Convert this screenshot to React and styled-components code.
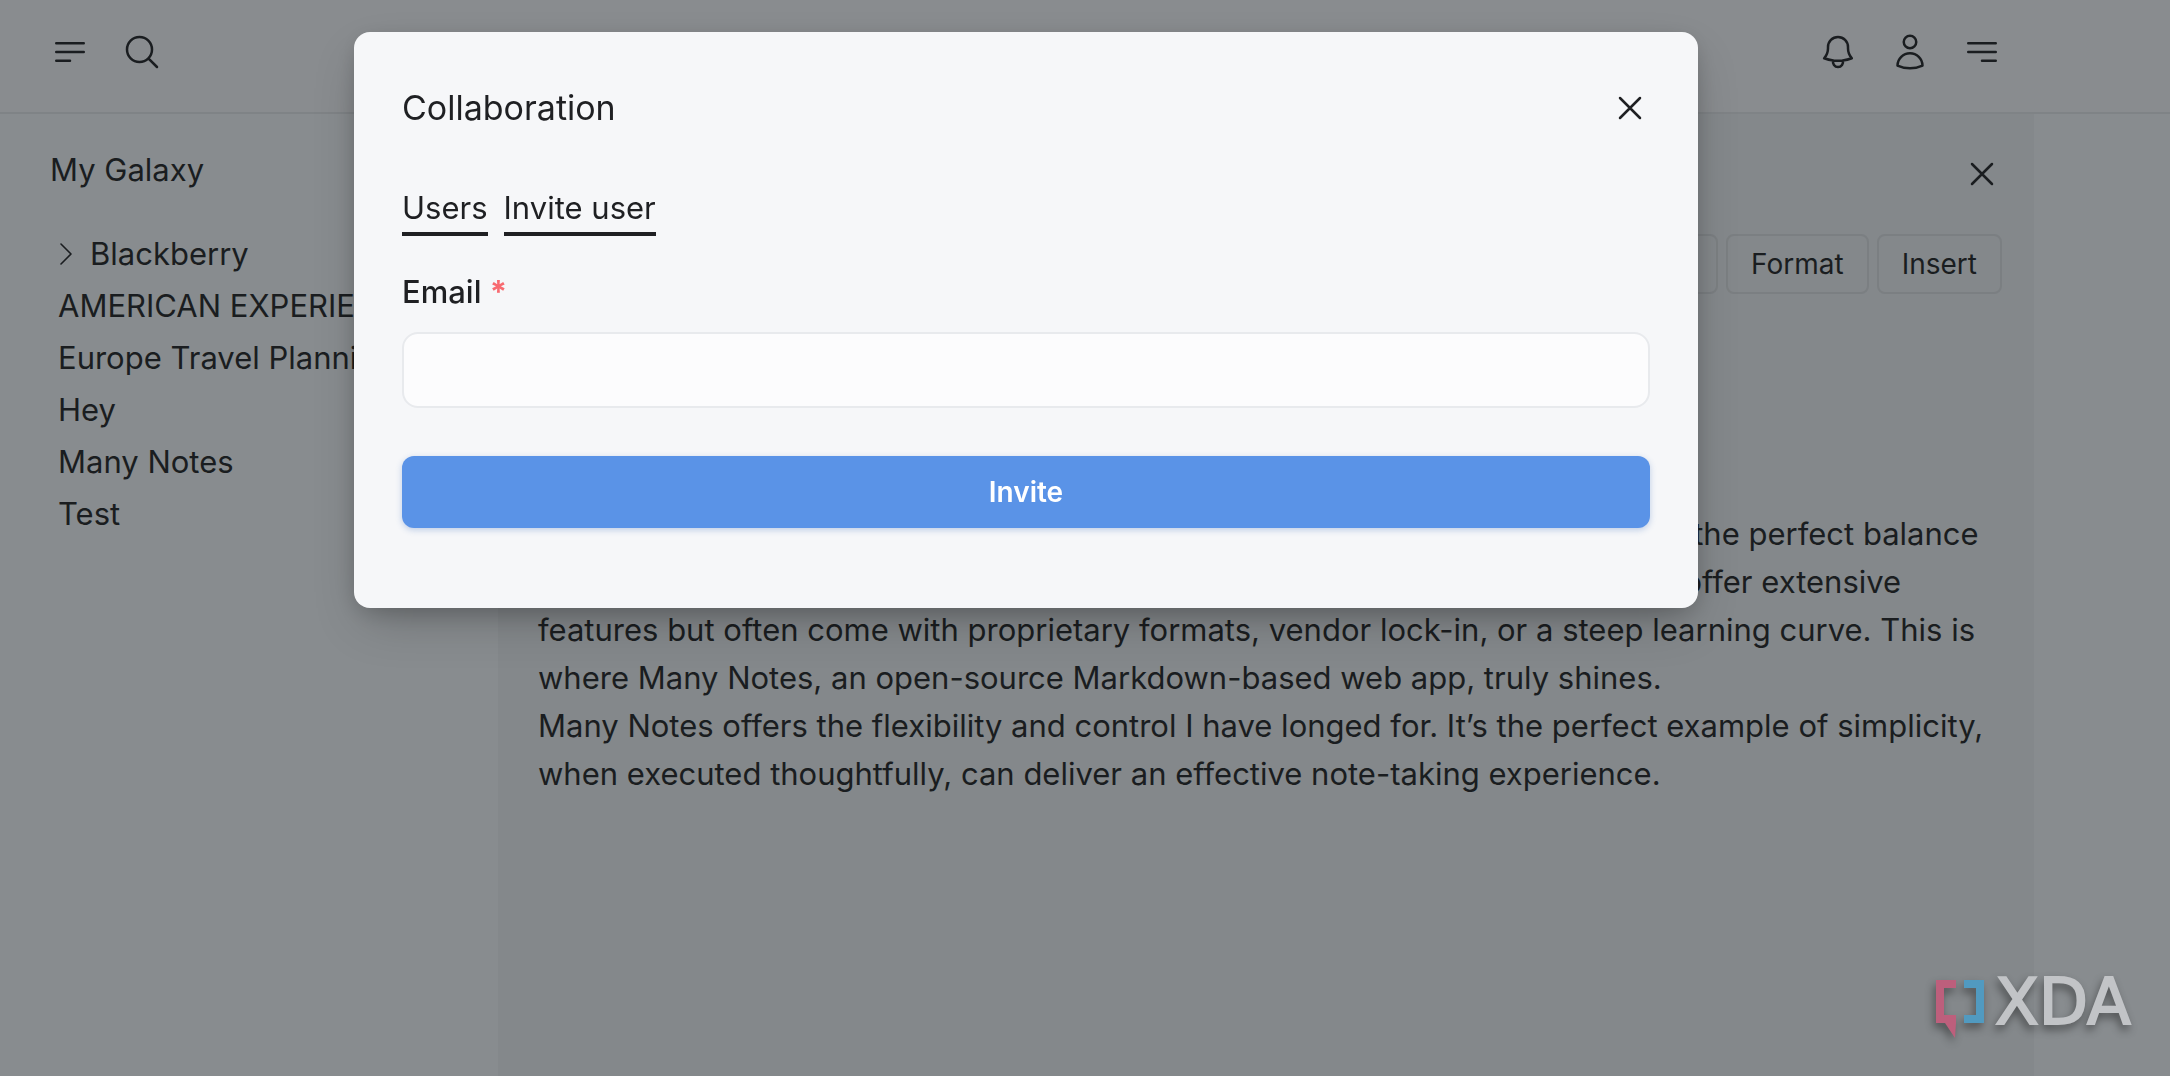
import React from "react";
import styled, { createGlobalStyle } from "styled-components";

const ink = "#1a1d20";

const GlobalStyle = createGlobalStyle`
  *, *::before, *::after { box-sizing: border-box; }
  body {
    margin: 0;
    background: #888c8f;
    color: ${ink};
    font-family: Inter, "Liberation Sans", sans-serif;
    font-size: 31px;
    line-height: 48px;
  }
  button, input { font: inherit; color: inherit; }
`;

const Page = styled.div`
  min-height: 100vh;
  display: flex;
  flex-direction: column;
`;

const Container = styled.div`
  width: 100%;
  max-width: 2034px;
  padding-left: 18px;
  display: flex;
`;

const Header = styled.header`
  background: #898c8f;
  border-bottom: 2px solid #7f8386;
`;

const HeaderBar = styled(Container)`
  justify-content: space-between;
  padding: 32px 32px 40px 50px;
`;

const IconGroup = styled.div`
  display: flex;
  gap: 32px;
`;

const IconButton = styled.button`
  display: flex;
  padding: 0;
  border: 0;
  background: none;
  cursor: pointer;
`;

const Svg = styled.svg`
  width: ${(p) => p.$size}px;
  height: ${(p) => p.$size}px;
  fill: none;
  stroke: currentColor;
  stroke-width: ${(p) => p.$stroke};
  stroke-linecap: round;
  stroke-linejoin: round;
`;

const Body = styled(Container)`
  flex: 1;
`;

const Sidebar = styled.nav`
  width: 480px;
  flex: none;
  padding: 32px;
  overflow: hidden;
`;

const VaultName = styled.h2`
  margin: 0 0 36px;
  font-size: 31px;
  line-height: 48px;
  font-weight: 400;
`;

const Tree = styled.ul`
  margin: 0;
  padding: 0;
  list-style: none;
  display: flex;
  flex-direction: column;
  gap: 4px;
`;

const TreeItem = styled.li`
  display: flex;
  align-items: center;
  gap: 8px;
  padding-left: ${(p) => (p.$folder ? 0 : 8)}px;
`;

const TreeLink = styled.a`
  color: inherit;
  text-decoration: none;
  white-space: nowrap;
`;

const Editor = styled.main`
  flex: 1;
  min-width: 0;
  padding: 40px 32px 32px;
  background: #84888b;
  display: flex;
  flex-direction: column;
`;

const EditorHead = styled.div`
  display: flex;
  justify-content: flex-end;
  margin-bottom: 40px;
`;

const Toolbar = styled.div`
  display: flex;
  justify-content: flex-end;
  gap: 8px;
  margin-bottom: 216px;
`;

const ToolButton = styled.button`
  height: 60px;
  padding: 0 23px;
  border: 2px solid #7b7f82;
  border-radius: 8px;
  background: none;
  font-size: 28px;
  line-height: 40px;
  cursor: pointer;
`;

const Note = styled.article`
  padding: 0 8px;
`;

const Paragraph = styled.p`
  margin: 0;
`;

const Overlay = styled.div`
  position: fixed;
  inset: 0;
  padding: 32px 118px 32px 0;
  display: flex;
  align-items: flex-start;
  justify-content: center;
`;

const Dialog = styled.section`
  width: 100%;
  max-width: 1344px;
  padding: 48px 48px 80px;
  border-radius: 16px;
  background: #f6f7f9;
  color: #1f2023;
  box-shadow: 0 20px 50px -12px rgba(0, 0, 0, 0.25), 0 6px 24px -4px rgba(0, 0, 0, 0.2);
`;

const DialogHead = styled.div`
  display: flex;
  align-items: center;
  justify-content: space-between;
  margin-bottom: 48px;
`;

const DialogTitle = styled.h1`
  margin: 0;
  font-size: 34px;
  line-height: 56px;
  font-weight: 400;
`;

const Tabs = styled.div`
  display: flex;
  gap: 16px;
  margin-bottom: 32px;
`;

const Tab = styled.button`
  padding: 0;
  border: 0;
  border-bottom: 4px solid currentColor;
  background: none;
  cursor: pointer;
`;

const Form = styled.form`
  display: flex;
  flex-direction: column;
`;

const Label = styled.label`
  margin-bottom: 16px;
  font-weight: 500;
`;

const Required = styled.span`
  color: #f86a70;
  font-weight: 700;
`;

const Field = styled.input`
  height: 76px;
  margin-bottom: 48px;
  padding: 12px 24px;
  border: 2px solid #e8eaed;
  border-radius: 16px;
  background: #fcfcfd;
  outline: none;
`;

const Submit = styled.button`
  height: 72px;
  border: 0;
  border-radius: 12px;
  background: #5a93e7;
  color: #fff;
  font-size: 28px;
  line-height: 40px;
  font-weight: 600;
  box-shadow: 0 2px 6px rgba(60, 110, 190, 0.3);
  cursor: pointer;
`;

const Brand = styled.div`
  position: fixed;
  right: 30px;
  bottom: 32px;
  filter: drop-shadow(-2px 5px 4px rgba(0, 0, 0, 0.4));
`;

const BrandSvg = styled.svg`
  display: block;
  width: 208px;
  height: 68px;
  overflow: visible;
`;

const BrandText = styled.text`
  fill: #c2c4c7;
  stroke: #c2c4c7;
  stroke-width: 2;
  font-family: "DejaVu Sans", sans-serif;
  font-size: 64px;
`;

const paths = {
  menuLeft: "M3.75 6.75h16.5M3.75 12h16.5m-16.5 5.25H12",
  menuRight: "M3.75 6.75h16.5M3.75 12h16.5M12 17.25h8.25",
  search:
    "m21 21-5.197-5.197m0 0A7.5 7.5 0 1 0 5.196 5.196a7.5 7.5 0 0 0 10.607 10.607Z",
  bell: "M14.857 17.082a23.848 23.848 0 0 0 5.454-1.31A8.967 8.967 0 0 1 18 9.75V9A6 6 0 0 0 6 9v.75a8.967 8.967 0 0 1-2.312 6.022c1.733.64 3.56 1.085 5.455 1.31m5.714 0a24.255 24.255 0 0 1-5.714 0m5.714 0a3 3 0 1 1-5.714 0",
  user: "M15.75 6a3.75 3.75 0 1 1-7.5 0 3.75 3.75 0 0 1 7.5 0ZM4.501 20.118a7.5 7.5 0 0 1 14.998 0A17.933 17.933 0 0 1 12 21.75c-2.676 0-5.216-.584-7.499-1.632Z",
  close: "M6 18 18 6M6 6l12 12",
  chevron: "m8.25 4.5 7.5 7.5-7.5 7.5",
};

function Icon({ name, size = 40, stroke = 1.5 }) {
  return (
    <Svg viewBox="0 0 24 24" $size={size} $stroke={stroke} aria-hidden="true">
      <path d={paths[name]} />
    </Svg>
  );
}

const notes = [
  "AMERICAN EXPERIENCE",
  "Europe Travel Planning",
  "Hey",
  "Many Notes",
  "Test",
];

export default function App() {
  return (
    <>
      <GlobalStyle />
      <Page>
        <Header>
          <HeaderBar>
            <IconGroup>
              <IconButton aria-label="Toggle sidebar"><Icon name="menuLeft" /></IconButton>
              <IconButton aria-label="Search"><Icon name="search" /></IconButton>
            </IconGroup>
            <IconGroup>
              <IconButton aria-label="Notifications"><Icon name="bell" /></IconButton>
              <IconButton aria-label="Account"><Icon name="user" /></IconButton>
              <IconButton aria-label="Menu"><Icon name="menuRight" /></IconButton>
            </IconGroup>
          </HeaderBar>
        </Header>
        <Body>
          <Sidebar>
            <VaultName>My Galaxy</VaultName>
            <Tree>
              <TreeItem $folder>
                <Icon name="chevron" size={32} stroke={1.2} />
                <TreeLink href="#">Blackberry</TreeLink>
              </TreeItem>
              {notes.map((n) => (
                <TreeItem key={n}>
                  <TreeLink href="#">{n}</TreeLink>
                </TreeItem>
              ))}
            </Tree>
          </Sidebar>
          <Editor>
            <EditorHead>
              <IconButton aria-label="Close note"><Icon name="close" /></IconButton>
            </EditorHead>
            <Toolbar>
              <ToolButton>View</ToolButton>
              <ToolButton>Format</ToolButton>
              <ToolButton>Insert</ToolButton>
            </Toolbar>
            <Note>
              <Paragraph>
                Over the years, I’ve tried countless note-taking apps in my search for one with the perfect balance
                of both simplicity and power. Popular tools like Notion, Evernote and OneNote offer extensive
                features but often come with proprietary formats, vendor lock-in, or a steep learning curve. This is
                where Many Notes, an open-source Markdown-based web app, truly shines.
              </Paragraph>
              <Paragraph>
                Many Notes offers the flexibility and control I have longed for. It’s the perfect example of
                simplicity, when executed thoughtfully, can deliver an effective note-taking experience.
              </Paragraph>
            </Note>
          </Editor>
        </Body>
      </Page>
      <Overlay>
        <Dialog role="dialog" aria-modal="true" aria-labelledby="dialog-title">
          <DialogHead>
            <DialogTitle id="dialog-title">Collaboration</DialogTitle>
            <IconButton aria-label="Close"><Icon name="close" /></IconButton>
          </DialogHead>
          <Tabs>
            <Tab type="button">Users</Tab>
            <Tab type="button">Invite user</Tab>
          </Tabs>
          <Form onSubmit={(e) => e.preventDefault()}>
            <Label htmlFor="email">
              Email <Required>*</Required>
            </Label>
            <Field id="email" type="email" required />
            <Submit type="submit">Invite</Submit>
          </Form>
        </Dialog>
      </Overlay>
      <Brand>
        <BrandSvg viewBox="0 0 208 68" role="img" aria-label="XDA">
          <path d="M4 4H24V12H12V39H24V47L23 62L13 47H4Z" fill="#bd5f7c" />
          <path d="M32 4H52V47H32V39H44V12H32Z" fill="#519ac0" />
          <BrandText x="63" y="48">XDA</BrandText>
        </BrandSvg>
      </Brand>
    </>
  );
}
